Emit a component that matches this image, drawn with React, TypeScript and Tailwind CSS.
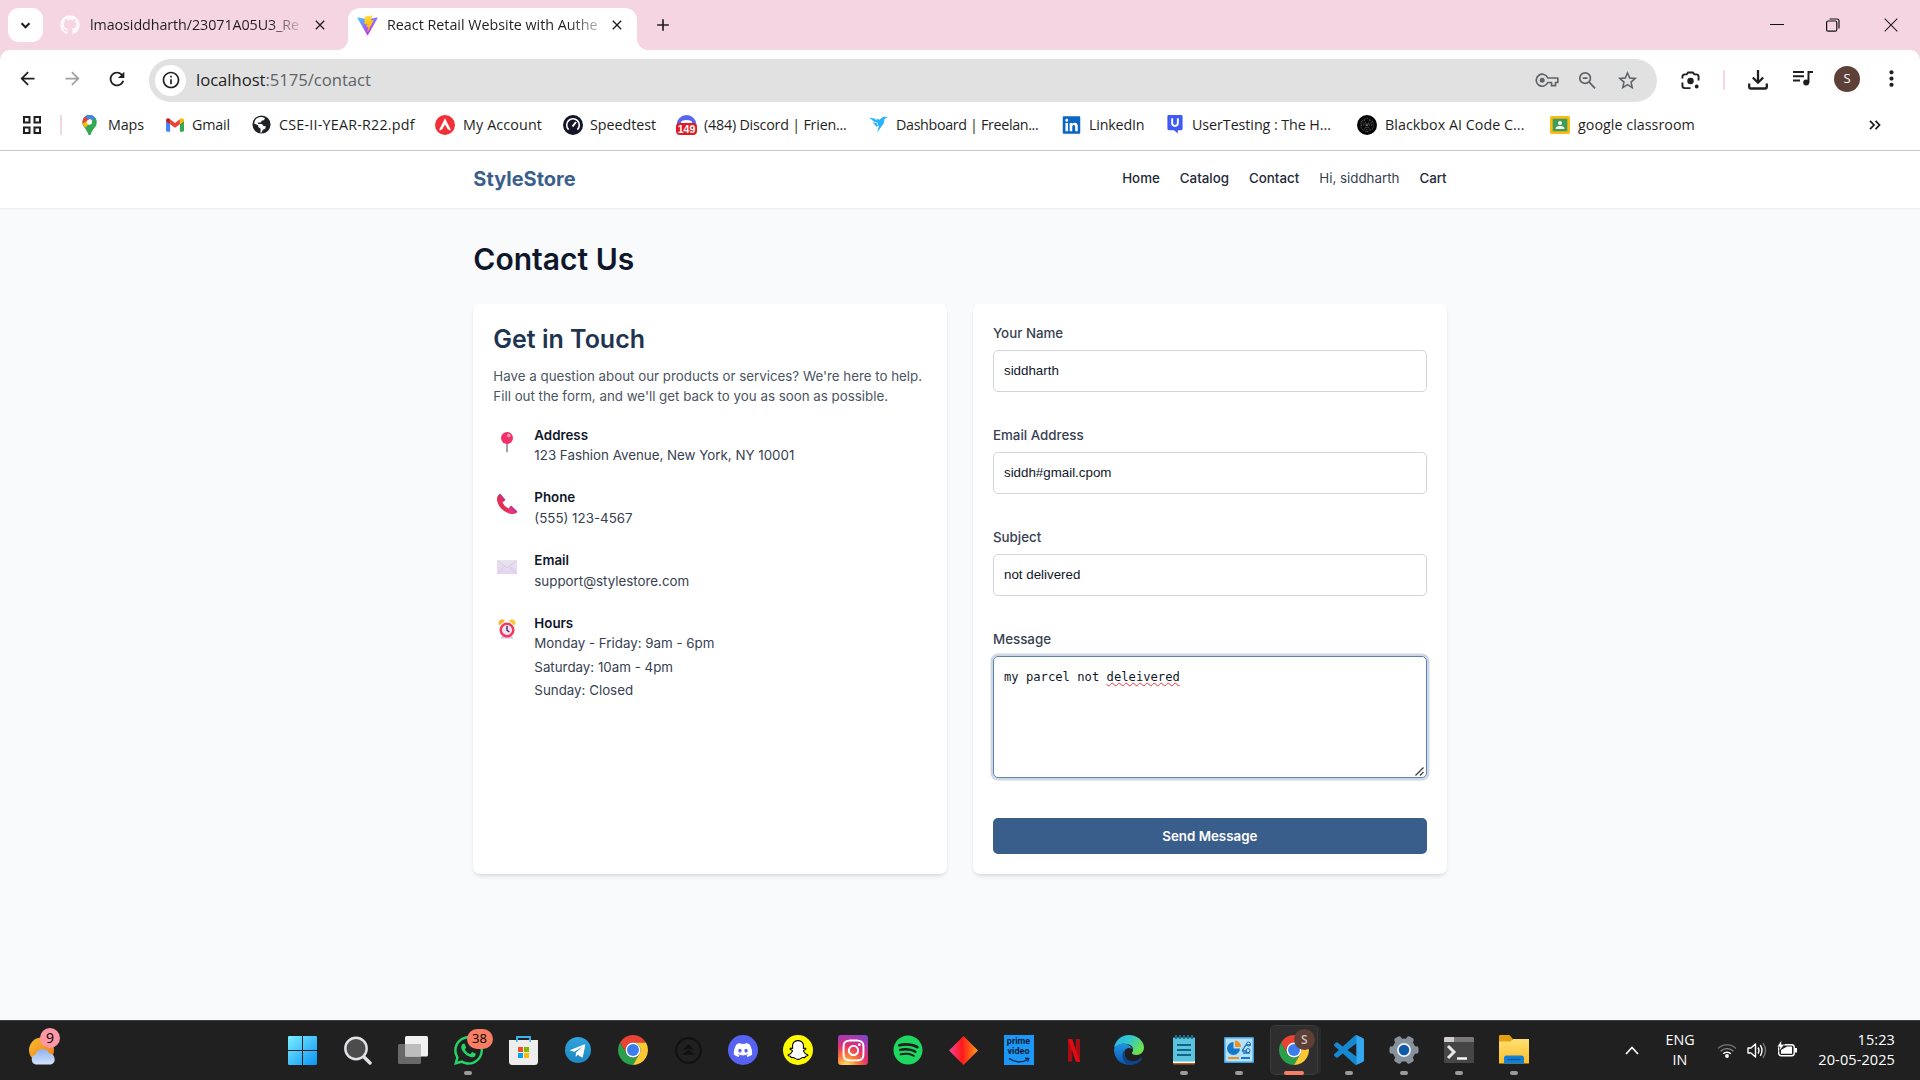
import React from 'react';
import { FaGithub, FaDiscord, FaSnapchatGhost, FaInstagram, FaSpotify, FaWhatsapp, FaLinkedin } from 'react-icons/fa';
import { MdArrowBack, MdArrowForward, MdRefresh, MdInfoOutline, MdStarBorder, MdMoreVert, MdClose, MdAdd } from 'react-icons/md';

const UI = 'font-["Open_Sans",sans-serif]';

function Chrome({ className }: { className: string }) {
  return (
    <svg viewBox="0 0 48 48" className={className}>
      <path fill="#ea4335" d="M24 12H44.78A24 24 0 0 0 3.22 12L13.61 30A12 12 0 0 1 24 12Z" />
      <path fill="#2b9f4a" d="M13.61 30L3.22 12A24 24 0 0 0 24 48L34.39 30A12 12 0 0 1 13.61 30Z" />
      <path fill="#fcc934" d="M34.39 30L24 48A24 24 0 0 0 44.78 12H24A12 12 0 0 1 34.39 30Z" />
      <circle cx="24" cy="24" r="12" fill="#fff" />
      <circle cx="24" cy="24" r="9.6" fill="#3b7ded" />
    </svg>
  );
}

function Vite() {
  return (
    <svg viewBox="0 0 410 404" className="h-[21px] w-[21px]">
      <defs>
        <linearGradient id="va" x1="6" y1="33" x2="235" y2="344" gradientUnits="userSpaceOnUse">
          <stop stopColor="#41D1FF" /><stop offset="1" stopColor="#BD34FE" />
        </linearGradient>
        <linearGradient id="vb" x1="194" y1="9" x2="236" y2="293" gradientUnits="userSpaceOnUse">
          <stop stopColor="#FFEA83" /><stop offset=".08" stopColor="#FFDD35" /><stop offset="1" stopColor="#FFA800" />
        </linearGradient>
      </defs>
      <path fill="url(#va)" d="M399.6 59.5L215.6 388.5c-3.8 6.8-13.5 6.8-17.4.1L10.6 59.6c-4.2-7.4 2.1-16.4 10.4-14.9l184.2 32.9c1.2.2 2.4.2 3.5 0l180.4-32.8c8.3-1.5 14.6 7.4 10.5 14.7z" />
      <path fill="url(#vb)" d="M293 1.6L156.8 28.3c-2.2.4-3.9 2.3-4 4.6l-8.4 141.5c-.2 3.3 2.9 5.9 6.1 5.2l38-8.8c3.6-.8 6.8 2.3 6 5.9l-11.2 55.2c-.8 3.7 2.7 6.9 6.3 5.8l23.4-7.1c3.6-1.1 7.1 2.1 6.3 5.8l-17.9 86.8c-1.1 5.4 6.1 8.4 9.1 3.7l2-3.1 111.1-221.8c1.9-3.7-1.3-8-5.4-7.2l-39.1 7.5c-3.7.7-6.8-2.7-5.8-6.3l25.5-88.4c1-3.6-2.2-7-5.8-6.3z" />
    </svg>
  );
}

/* ---------- bookmark icons ---------- */
const mapsIcon = (
  <svg viewBox="0 0 16 22" className="h-[20px] w-[15px]">
    <defs><clipPath id="pin"><path d="M8 0a8 8 0 0 1 8 8c0 5-4.500 6.500-6.600 12.500-.5 2-2.300 2-2.800 0C4.500 14.500 0 13 0 8a8 8 0 0 1 8-8Z" /></clipPath></defs>
    <g clipPath="url(#pin)">
      <path fill="#34a853" d="M0 0h16v22H0z" />
      <path fill="#4285f4" d="M8 0h8v4L5 16 0 10Z" />
      <path fill="#1a73e8" d="M0 0h8L2 6Z" />
      <path fill="#ea4335" d="M0 2l3-1 5 6-5 6-3-3Z" />
      <path fill="#4285f4" d="M3 0h13v3L9 9Z" />
      <path fill="#fbbc04" d="M0 10l3.500 4L12 6l-3-2Z" />
      <path fill="#34a853" d="M16 3v19H5l-2-7.500L15 2Z" />
    </g>
    <circle cx="8" cy="7.800" r="2.900" fill="#fff" />
  </svg>
);
const gmailIcon = (
  <svg viewBox="0 0 24 18" className="h-[14px] w-[18px]">
    <path fill="#4285f4" d="M0 3v13.400C0 17.300.7 18 1.600 18H5.500V7.500Z" />
    <path fill="#34a853" d="M24 3v13.400c0 .9-.7 1.600-1.600 1.600H18.500V7.500Z" />
    <path fill="#c5221f" d="M0 2.500C0 .3 2.500-.9 4.200.4L5.500 1.400V8L0 4Z" />
    <path fill="#fbbc04" d="M24 2.500C24 .3 21.500-.9 19.800.4L18.500 1.400V8L24 4Z" />
    <path fill="#ea4335" d="M5.500 1.400L12 6.300l6.500-4.900V8L12 12.800 5.500 8Z" />
  </svg>
);
const globeIcon = (
  <svg viewBox="0 0 20 20" className="h-[19px] w-[19px]">
    <circle cx="10" cy="10" r="9.500" fill="#202124" />
    <path fill="#fff" d="M9 2.200c1.500 0 3.500.4 4.700 1.300l-1.200 2-2.500.5-.5 2H6.700l-.5 1.500h4.300l1.700 2 2.300.3-.4 2.500-2.500 1.200-1.500 3-1.300.2.300-4.200-2.500-2-.2-1.800L2.200 9C2.700 5.500 5 2.600 9 2.200Z" />
  </svg>
);
const accountIcon = (
  <svg viewBox="0 0 20 20" className="h-[20px] w-[20px]">
    <circle cx="10" cy="10" r="10" fill="#f03036" />
    <path d="M10 3.200L15.600 14.300q.4 1.600-1.200.9L12.600 14 10 9.600 7.400 14l-1.800 1.200q-1.600.7-1.200-.9Z" fill="#fff" />
  </svg>
);
const speedIcon = (
  <svg viewBox="0 0 20 20" className="h-[20px] w-[20px]" fill="none" stroke="#fff">
    <circle cx="10" cy="10" r="10" fill="#141526" stroke="none" />
    <path d="M5.600 14.600a6.300 6.300 0 1 1 8.800 0" strokeWidth="1.600" />
    <path d="M9.500 11.500L13 7" strokeWidth="2" />
  </svg>
);
const discordBadge = (
  <span className="relative block h-[20px] w-[21px]">
    <svg viewBox="0 0 21 20" className="h-full w-full">
      <circle cx="10.500" cy="10" r="10" fill="#5865f2" />
      <path d="M5.500 6q5-2 10 0l1 4h-12Z" fill="#fff" />
      <rect y="8" width="21" height="12" rx="4" fill="#e01b22" />
    </svg>
    <span className='absolute inset-x-0 top-[8px] text-center font-["Liberation_Sans",sans-serif] text-[10.500px] leading-[12px] font-bold text-white'>149</span>
  </span>
);
const birdIcon = (
  <svg viewBox="0 0 20 18" className="h-[17px] w-[19px]">
    <path fill="#29b2fe" d="M0 1.500L6.500 3l2 3.200L6 6.500ZM3.500 6.800L8 7.500l1.500 3-1.800 1L5.500 8.500ZM11 4l4-3.300L20 1l-3.500 1.800-1 5.200-7 9.500 1.800-6.500L7.500 4.500 9 3Z" />
  </svg>
);
const linkedinIcon = <FaLinkedin className="h-[20px] w-[19px] text-[#0a66c2]" />;
const userTestingIcon = (
  <svg viewBox="0 0 16 20" className="h-[19px] w-[16px]">
    <path fill="#3f5bf6" d="M1.500 0h13A1.500 1.500 0 0 1 16 1.500v13a1.500 1.500 0 0 1-1.500 1.500H11v3.500L7 16H1.500A1.500 1.500 0 0 1 0 14.500v-13A1.500 1.500 0 0 1 1.500 0Z" />
    <path d="M5 3.500v5a3 3 0 0 0 6 0v-5" stroke="#fff" strokeWidth="2" fill="none" />
  </svg>
);
const blackboxIcon = (
  <svg viewBox="0 0 20 20" className="h-[20px] w-[20px]">
    <circle cx="10" cy="10" r="10" fill="#050505" />
    <g stroke="#8a8a8a" strokeWidth=".7" fill="none" strokeDasharray="1 1">
      <path d="M10 3l6 3.500v7L10 17l-6-3.500v-7ZM4 6.500l6 3.500 6-3.500M10 10v7M7 5l6 10M13 5L7 15M4 10h12" />
    </g>
  </svg>
);
const classroomIcon = (
  <svg viewBox="0 0 20 18" className="h-[18px] w-[20px]">
    <rect width="20" height="18" rx="1.500" fill="#f9bc15" />
    <rect x="2.700" y="2.700" width="14.600" height="12.600" fill="#3f9b57" />
    <circle cx="10" cy="7" r="2" fill="#fff" />
    <path d="M5.500 13q0-3 4.500-3t4.500 3Z" fill="#fff" />
  </svg>
);

type Mark = { icon: React.ReactNode; text: string; cell: string; iconCell: string; track: string };
const marks: Mark[] = [
  { icon: mapsIcon, text: 'Maps', cell: 'w-[84px]', iconCell: 'w-[26px]', track: 'tracking-[-0.1px]' },
  { icon: gmailIcon, text: 'Gmail', cell: 'w-[86px]', iconCell: 'w-[26px]', track: 'tracking-[-0.16px]' },
  { icon: globeIcon, text: 'CSE-II-YEAR-R22.pdf', cell: 'w-[183px]', iconCell: 'w-[27px]', track: 'tracking-[0.22px]' },
  { icon: accountIcon, text: 'My Account', cell: 'w-[128px]', iconCell: 'w-[28px]', track: 'tracking-[0.13px]' },
  { icon: speedIcon, text: 'Speedtest', cell: 'w-[113px]', iconCell: 'w-[27px]', track: 'tracking-[-0.05px]' },
  { icon: discordBadge, text: '(484) Discord | Frien...', cell: 'w-[193px]', iconCell: 'w-[28px]', track: 'tracking-[-0.21px]' },
  { icon: birdIcon, text: 'Dashboard | Freelan...', cell: 'w-[193px]', iconCell: 'w-[27px]', track: 'tracking-[-0.34px]' },
  { icon: linkedinIcon, text: 'LinkedIn', cell: 'w-[105px]', iconCell: 'w-[27px]', track: 'tracking-[-0.2px]' },
  { icon: userTestingIcon, text: 'UserTesting : The H...', cell: 'w-[190px]', iconCell: 'w-[25px]', track: 'tracking-[-0.07px]' },
  { icon: blackboxIcon, text: 'Blackbox AI Code C...', cell: 'w-[193px]', iconCell: 'w-[28px]', track: 'tracking-[0.03px]' },
  { icon: classroomIcon, text: 'google classroom', cell: 'w-[150px]', iconCell: 'w-[28px]', track: 'tracking-[0.03px]' },
];

function Browser() {
  return (
    <header className={`${UI} text-[#1f1f1f]`}>
      {/* tab strip */}
      <div className="flex h-[50px] bg-[#f6d5e3] pl-2">
        <div className="mt-2 grid h-[34px] w-[35px] place-items-center rounded-[11px] bg-white">
          <svg viewBox="0 0 12 8" className="h-[7px] w-[11px]" fill="none" stroke="#1f1f1f" strokeWidth="2.400"><path d="M1.500 1.500L6 6l4.500-4.500" /></svg>
        </div>
        <div className="flex h-[50px] w-[305px] items-center pl-[17px]">
          <FaGithub className="h-[20px] w-[20px] shrink-0 text-[#fdf6fa]" />
          <span className="ml-[10px] w-[212px] shrink-0 overflow-hidden bg-linear-to-r from-[#1f1f1f] from-85% to-[#1f1f1f]/10 bg-clip-text text-[14.3px] tracking-[-0.07px] whitespace-nowrap text-transparent">lmaosiddharth/23071A05U3_Re</span>
          <MdClose className="ml-[10px] h-[16px] w-[16px] shrink-0" />
        </div>
        <div className="relative mt-2 flex h-[42px] w-[289px] items-center rounded-t-[12px] bg-white pl-[9px]">
          <span className="absolute bottom-0 -left-[12px] h-[12px] w-[12px] bg-[radial-gradient(circle_at_0_0,#f6d5e3_12px,#fff_12.500px)]" />
          <span className="absolute -right-[12px] bottom-0 h-[12px] w-[12px] bg-[radial-gradient(circle_at_100%_0,#f6d5e3_12px,#fff_12.500px)]" />
          <div className="-mt-2 flex items-center">
            <Vite />
            <span className="ml-[9px] w-[212px] overflow-hidden bg-linear-to-r from-[#1f1f1f] from-85% to-[#1f1f1f]/30 bg-clip-text text-[14.3px] whitespace-nowrap text-transparent">React Retail Website with Authe</span>
            <MdClose className="ml-[10px] h-[16px] w-[16px] shrink-0" />
          </div>
        </div>
        <MdAdd className="mt-[15px] ml-[16px] h-[20px] w-[20px]" />
        <div className="ml-auto flex h-[50px] items-center">
          <svg className="h-[14px] w-[14px]" viewBox="0 0 14 14"><path d="M0 6.500h14" stroke="#111" /></svg>
          <svg className="ml-[42px] h-[14px] w-[14px]" viewBox="0 0 14 14" fill="none" stroke="#111" strokeWidth="1.200"><rect x=".6" y="3" width="10.200" height="10.200" rx="1.500" /><path d="M3.500 1H11a2 2 0 0 1 2 2v7.500" /></svg>
          <svg className="mr-[22px] ml-[44px] h-[14px] w-[14px]" viewBox="0 0 14 14"><path d="M.7.7l12.600 12.600M13.300.7L.7 13.300" stroke="#222" strokeWidth="1.100" /></svg>
        </div>
      </div>
      <div className="bg-[#f6d5e3]">
        <div className="rounded-t-[10px] bg-white">
          {/* address row */}
          <div className="flex h-[60px] items-center pt-[1px] pl-[17px]">
            <MdArrowBack className="-mt-[4px] h-[21px] w-[21px]" />
            <MdArrowForward className="-mt-[4px] ml-[24px] h-[21px] w-[21px] text-[#a0a0a0]" />
            <MdRefresh className="-mt-[4px] ml-[23px] h-[22px] w-[22px]" />
            <div className="ml-[21px] flex h-[43px] w-[1508px] items-center rounded-full bg-[#e1e1e1] pl-[6px]">
              <div className="-mt-px grid h-[31px] w-[31px] place-items-center rounded-full bg-white"><MdInfoOutline className="h-[20px] w-[20px]" /></div>
              <span className="-mt-[2px] ml-[10px] text-[16.700px] tracking-[-0.05px]">localhost<span className="text-[#5f6368]">:5175/contact</span></span>
              <div className="mr-[18px] ml-auto -mt-px flex items-center text-[#5f6368]">
                <svg viewBox="0 0 24 14" className="h-[14px] w-[24px]" fill="none" stroke="currentColor" strokeWidth="1.700">
                  <path d="M12.800 5a6 6 0 1 0 0 4.500H16.500v3.200h4V9.500H22.800V5Z" strokeLinejoin="round" /><circle cx="7.200" cy="7.200" r="2.500" fill="currentColor" stroke="none" />
                </svg>
                <svg viewBox="0 0 20 20" className="ml-[19px] h-[19px] w-[19px]" fill="none" stroke="currentColor" strokeWidth="1.800">
                  <circle cx="7.500" cy="7.500" r="5.600" /><path d="M11.700 11.700l6.300 6.500M5 7.500h5" />
                </svg>
                <MdStarBorder className="ml-[19px] h-[23px] w-[23px]" />
              </div>
            </div>
            <svg viewBox="0 0 20 20" className="-mt-px ml-[24px] h-[19px] w-[19px]" fill="none" stroke="#1f1f1f" strokeWidth="2">
              <path d="M1.500 8V6a2.500 2.500 0 0 1 2.500-2.500h2L7.500 1.500h5L14 3.500h2A2.500 2.500 0 0 1 18.500 6v4M1.500 12v3.500A2.500 2.500 0 0 0 4 18h6" />
              <circle cx="10" cy="10.500" r="3.400" fill="#1f1f1f" stroke="none" /><circle cx="16.500" cy="16.300" r="2" fill="#1f1f1f" stroke="none" />
            </svg>
            <span className="-mt-px ml-[23px] h-[20px] w-[2px] rounded bg-[#f6d5e3]" />
            <svg viewBox="0 0 20 20" className="-mt-px ml-[23px] h-[20px] w-[20px]" fill="none" stroke="#1f1f1f" strokeWidth="2.300">
              <path d="M10 0v12M4.800 7.500L10 12.700l5.200-5.200M1.200 13.500v3.300a1.700 1.700 0 0 0 1.700 1.700h14.200a1.700 1.700 0 0 0 1.700-1.700v-3.300" />
            </svg>
            <svg viewBox="0 0 20 16" className="-mt-[5px] ml-[25px] h-[16px] w-[20px]" fill="none" stroke="#1f1f1f" strokeWidth="2">
              <path d="M0 2h11M0 6.200h11M0 10.400h7M15.500 12.500V2H20" /><circle cx="13.200" cy="12.500" r="3" fill="#1f1f1f" stroke="none" />
            </svg>
            <div className="-mt-[4px] ml-[21px] grid h-[26px] w-[26px] place-items-center rounded-full bg-[#5d4037] text-[13px] text-white">S</div>
            <MdMoreVert className="-mt-[4px] ml-[19px] h-[25px] w-[25px]" />
          </div>
          {/* bookmarks */}
          <div className="flex h-[40px] items-center pb-[11px] pl-[23px]">
            <svg viewBox="0 0 18 18" className="h-[18px] w-[18px]" fill="none" stroke="#1f1f1f" strokeWidth="2">
              <path d="M1 1h5.500v5.500H1zM11.500 1H17v5.500h-5.500zM1 11.500h5.500V17H1zM11.500 11.500H17V17h-5.500z" />
            </svg>
            <span className="mr-[20px] ml-[19px] h-[20px] w-[2px] shrink-0 bg-[#f6d5e3]" />
            {marks.map((m) => (
              <div key={m.text} className={`flex shrink-0 items-center ${m.cell}`}>
                <span className={`shrink-0 ${m.iconCell}`}>{m.icon}</span>
                <span className={`text-[14.3px] leading-5 whitespace-nowrap ${m.track}`}>{m.text}</span>
              </div>
            ))}
            <svg viewBox="0 0 12 10" className="ml-[169px] h-[10px] w-[12px]" fill="none" stroke="#1f1f1f" strokeWidth="1.800"><path d="M1 .8L5 5 1 9.200M6.500.8L10.500 5l-4 4.200" /></svg>
          </div>
          <div className="h-px bg-[#c9c9c9]" />
        </div>
      </div>
    </header>
  );
}

/* ---------- contact page ---------- */
const pinEmoji = (
  <svg viewBox="0 0 20 22" className="h-[22px] w-[20px]">
    <rect x="9" y="11" width="2" height="9.500" rx="1" fill="#a79db0" />
    <circle cx="10" cy="6" r="6" fill="#f2306b" /><circle cx="11.800" cy="3.500" r="1.700" fill="#fda3bd" />
  </svg>
);
const phoneEmoji = (
  <svg viewBox="0 0 20 20" className="h-[20px] w-[20px]">
    <path fill="#e32f56" d="M1.200 1.200L3.300 0l4.900 6-2.700 2.500q1.500 3.700 6 6L14 11.800l6 5.500-.5 1.700q-4 2-8.500 0Q1.500 15 0 6q-.2-3 1.200-4.800Z" />
    <path fill="#b9358c" d="M2 .5L3.300 0l5.200 5.700-2 1.600ZM12.700 13.200L14 11.600l6 5.600-.4 1.400Z" />
    <path fill="#e8338f" d="M12 15l1-1.500 6.500 5.200q-4 1.500-7.500.2Z" />
  </svg>
);
const mailEmoji = (
  <svg viewBox="0 0 20 14" className="h-[14px] w-[20px]">
    <defs><linearGradient id="ml" x1="0" y1="0" x2="0" y2="1"><stop stopColor="#e8e5ee" /><stop offset="1" stopColor="#e4d2f2" /></linearGradient></defs>
    <rect width="20" height="14" rx=".8" fill="url(#ml)" />
    <path d="M.5.7L10 8l9.500-7.300M.5 13.300l7-6.800M19.500 13.300l-7-6.800" stroke="#cfc4da" strokeWidth=".7" fill="none" />
  </svg>
);
const clockEmoji = (
  <svg viewBox="0 0 18 20" className="ml-px h-[20px] w-[18px]">
    <path d="M2.500 19.500L5 15.500h8l2.500 4Z" fill="#d9c4ea" />
    <path d="M.5 5.500Q0 .5 4.500.3L7.200 1.700 2 6Z" fill="#f5b52c" /><path d="M17.500 5.500Q18 .5 13.500.3L10.800 1.700 16 6Z" fill="#fbc934" />
    <circle cx="9" cy="11" r="6.300" fill="#efe3f5" stroke="#f23a5e" strokeWidth="2.500" />
    <path d="M9 7v4.200l2.300 1.800" stroke="#3d2a55" strokeWidth="1.400" fill="none" />
  </svg>
);

const infos: { icon: React.ReactNode; pad: string; title: string; lines: string[] }[] = [
  { icon: pinEmoji, pad: 'pt-[5px]', title: 'Address', lines: ['123 Fashion Avenue, New York, NY 10001'] },
  { icon: phoneEmoji, pad: 'pt-[5px]', title: 'Phone', lines: ['(555) 123-4567'] },
  { icon: mailEmoji, pad: 'pt-[8px]', title: 'Email', lines: ['support@stylestore.com'] },
  { icon: clockEmoji, pad: 'pt-[4px]', title: 'Hours', lines: ['Monday - Friday: 9am - 6pm', 'Saturday: 10am - 4pm', 'Sunday: Closed'] },
];

function Field({ label, value }: { label: string; value: string }) {
  return (
    <div className="mb-[33px]">
      <div className="mb-[7px] leading-5 font-medium text-[#374151]">{label}</div>
      <div className='flex h-[42px] items-center rounded-[5px] border border-[#d1d5db] px-[10px] font-["Liberation_Sans",sans-serif] text-[13.330px] text-[#0f172a]'>{value}</div>
    </div>
  );
}

const card = 'h-[570px] rounded-[7px] bg-white px-5 pb-5 shadow-[0_3px_5px_-1px_rgba(0,0,0,0.1),0_2px_3px_-1px_rgba(0,0,0,0.06)]';

function Page() {
  return (
    <div className='min-h-0 grow bg-[#f9fafc] font-["Inter",sans-serif] text-[13.330px]'>
      <div className="h-[57px] bg-white shadow-[0_1px_2px_rgba(0,0,0,0.07)]">
        <div className="mx-auto flex h-[56px] w-[973.330px] items-center justify-between">
          <span className="text-[20px] font-bold text-[#3b5f8c]">StyleStore</span>
          <nav className="flex gap-5 font-medium text-[#1f2937]">
            <span>Home</span><span>Catalog</span><span>Contact</span>
            <span className="font-normal text-[#374151]">Hi, siddharth</span><span>Cart</span>
          </nav>
        </div>
      </div>
      <main className="mx-auto w-[973.330px] pt-[33px]">
        <h1 className="mb-[27px] text-[30px] leading-9 font-semibold text-[#0f172a]">Contact Us</h1>
        <div className="grid grid-cols-2 gap-[26px]">
          <section className={`${card} pt-5`}>
            <h2 className="text-[25px] leading-[30px] font-semibold text-[#1e3450]">Get in Touch</h2>
            <p className="mt-3 mb-[20.500px] leading-5 whitespace-nowrap text-[#4b5563]">Have a question about our products or services? We're here to help.<br />Fill out the form, and we'll get back to you as soon as possible.</p>
            <div className="flex flex-col gap-[22px]">
              {infos.map((i) => (
                <div key={i.title} className="flex">
                  <div className={`h-[40px] w-[41px] pl-[4px] ${i.pad}`}>{i.icon}</div>
                  <div>
                    <h3 className="leading-[17.500px] font-semibold text-[#0f172a]">{i.title}</h3>
                    {i.lines.map((l) => <p key={l} className="leading-[23.300px] text-[#374151]">{l}</p>)}
                  </div>
                </div>
              ))}
            </div>
          </section>
          <section className={`${card} pt-[19px]`}>
            <Field label="Your Name" value="siddharth" />
            <Field label="Email Address" value="siddh#gmail.cpom" />
            <Field label="Subject" value="not delivered" />
            <div className="mb-[7px] leading-5 font-medium text-[#374151]">Message</div>
            <div className='relative h-[122px] rounded-[5px] border border-[#5a82b4] px-[10px] pt-[12px] font-["DejaVu_Sans_Mono",monospace] text-[12.180px] leading-4 text-[#0f172a] shadow-[0_0_0_2.500px_#ced7e2]'>
              my parcel not <span className="underline decoration-[#f0323c] decoration-wavy decoration-[1px] underline-offset-[1px]">deleivered</span>
              <svg viewBox="0 0 10 10" className="absolute right-[2px] bottom-[1px] h-[9px] w-[9px]" stroke="#444" strokeWidth="1.500"><path d="M.5 9.500l9-9M5.500 9.500l4-4" /></svg>
            </div>
            <div className="mt-10 grid h-[36px] place-items-center rounded-[5px] bg-[#3a5e8c] pt-[1px] font-semibold text-white">Send Message</div>
          </section>
        </div>
      </main>
    </div>
  );
}

/* ---------- taskbar ---------- */
const winIcon = (
  <svg viewBox="0 0 29 29" className="h-[29px] w-[29px]">
    <defs><linearGradient id="wn" x1="0" y1="0" x2="29" y2="29" gradientUnits="userSpaceOnUse"><stop stopColor="#7ceeff" /><stop offset="1" stopColor="#0a93f5" /></linearGradient></defs>
    <path fill="url(#wn)" d="M0 1a1 1 0 0 1 1-1h13v14H0ZM15 0h13a1 1 0 0 1 1 1v13H15ZM0 15h14v14H1a1 1 0 0 1-1-1ZM15 15h14v13a1 1 0 0 1-1 1H15Z" />
  </svg>
);
const searchIcon = (
  <svg viewBox="0 0 28 29" className="h-[29px] w-[28px]" fill="none" stroke="#e2e2e6">
    <path d="M19 20l7 7" strokeWidth="3.400" strokeLinecap="round" /><circle cx="12" cy="12.500" r="10.700" fill="#4c4c4c" strokeWidth="2.400" />
  </svg>
);
const taskViewIcon = (
  <svg viewBox="0 0 30 28" className="h-[28px] w-[30px]">
    <rect y="8" width="23" height="20" rx="1.500" fill="#686868" /><rect x="7" width="23" height="20.500" rx="1.500" fill="#f1f1f1" /><path d="M7 8h16v12.500H8.500A1.500 1.500 0 0 1 7 19Z" fill="#bdbdbd" />
  </svg>
);
const storeIcon = (
  <svg viewBox="0 0 29 29" className="h-[29px] w-[29px]">
    <path d="M8 6V1h13v5" fill="none" stroke="#36b6ee" strokeWidth="1.800" />
    <path d="M0 4h29v21.500a3.500 3.500 0 0 1-3.500 3.500h-22A3.500 3.500 0 0 1 0 25.500Z" fill="#ededed" />
    <path d="M7.800 2.500V6M21.200 2.500V6" stroke="#36b6ee" strokeWidth="1.600" />
    <path fill="#f25022" d="M9 11h5v5H9z" /><path fill="#7fba00" d="M15 11h5v5h-5z" /><path fill="#00a4ef" d="M9 17h5v5H9z" /><path fill="#ffb900" d="M15 17h5v5h-5z" />
  </svg>
);
const telegramIcon = (
  <svg viewBox="0 0 240 240" className="h-[26px] w-[26px]">
    <defs><linearGradient id="tg" x1="0" y1="0" x2="0" y2="1"><stop stopColor="#30a5de" /><stop offset="1" stopColor="#1f86c0" /></linearGradient></defs>
    <circle cx="120" cy="120" r="120" fill="url(#tg)" />
    <path fill="#fff" d="M50 119L176 70c7-2 12 1 10 11l-21 101c-2 7-6 9-13 5l-33-24-16 16c-3 2-4 2-5-1l4-35 60-56-76 48-36-11c-6-2-6-4 0-5Z" />
  </svg>
);
const darkIcon = (
  <svg viewBox="0 0 27 27" className="h-[27px] w-[27px]">
    <circle cx="13.500" cy="13.500" r="12.300" fill="none" stroke="#121212" strokeWidth="2.200" />
    <path d="M13.500 7.500l5.500 5h-3l-2.500-1-2.500 1H8ZM13.500 12.800l6.500 5H7Z" fill="#101010" />
  </svg>
);
const igIcon = (
  <span className="grid h-[30px] w-[30px] place-items-center rounded-[3px] bg-[radial-gradient(circle_at_28%_105%,#fdd05a_8%,#fb7a3a_30%,#e0326f_55%,#a73bb5_80%,#5256d6_105%)]">
    <FaInstagram className="h-[25px] w-[25px] text-white" />
  </span>
);
const diamondIcon = (
  <svg viewBox="0 0 29 29" className="h-[29px] w-[29px]">
    <defs><linearGradient id="dm" x1="0" x2="1"><stop stopColor="#f5429b" /><stop offset=".45" stopColor="#ff1a1a" /><stop offset="1" stopColor="#ff9a1a" /></linearGradient></defs>
    <path d="M14.500 0L29 14.500 14.500 29 0 14.500Z" fill="url(#dm)" />
  </svg>
);
const primeIcon = (
  <span className='flex h-[30px] w-[30px] flex-col items-center bg-[#1b98f7] pt-[1px] font-["Roboto",sans-serif] text-[9px] leading-[11px] font-bold text-[#0b1c33]'>
    <span>prime</span>
    <span className="-mt-[1px]">video</span>
    <svg viewBox="0 0 22 7" className="h-[7px] w-[22px]" fill="none" stroke="#0b1c33" strokeWidth="1.300"><path d="M1 1.500q9 6 18 1.500M17 1.500h3.500L20 4.500" /></svg>
  </span>
);
const netflixIcon = (
  <svg viewBox="0 0 13 25" className="h-[23px] w-[12px]">
    <path d="M0 0h4.500v24.500L0 25ZM8.500 0H13v25l-4.500-.5Z" fill="#a80d14" /><path d="M0 0h4.500L13 25l-4.500-.5Z" fill="#e50914" />
  </svg>
);
const edgeIcon = (
  <svg viewBox="0 0 30 30" className="h-[30px] w-[30px]">
    <defs>
      <linearGradient id="e1" x1="0" y1="0" x2="1" y2=".5"><stop stopColor="#2cb3e8" /><stop offset=".5" stopColor="#33c6cf" /><stop offset="1" stopColor="#6be24d" /></linearGradient>
      <linearGradient id="e2" x1="0" y1="0" x2="0" y2="1"><stop stopColor="#1e95e0" /><stop offset="1" stopColor="#0f56ae" /></linearGradient>
    </defs>
    <path fill="url(#e1)" d="M0 13.500C1 5.500 7 0 15 0s15 6 15 12.500c0 4.500-3.500 7.500-7.500 7.500-3.500 0-5-1.200-4.500-2.200 1.700-2.300 1.700-6.500-3-8.300-6-2.200-13 .5-15 4Z" />
    <path fill="url(#e2)" d="M0 14.500C2 9.500 7.500 7.500 12.500 9c3 1 5 3 5.500 5-5-3-8.500 1.500-7.500 6 1 5 5.500 8 9.500 8.500C10 32.500 0 25.500 0 14.500Z" />
    <path fill="#0d458f" d="M11 14.500c-2.500 5 .5 10.500 6 11.500 4 .7 7.500-1 9.500-3 1.200-.8 2 .2 1.300 1.200C25.500 27.500 21 30 17 30 9.500 29.500 5.500 20 11 14.500Z" />
  </svg>
);
const notepadIcon = (
  <svg viewBox="0 0 22 30" className="h-[30px] w-[22px]">
    <rect y="3" width="22" height="26.500" rx="1" fill="#b5601e" /><rect y="3" width="22" height="25" fill="#f3f7f8" /><rect y="2.500" width="22" height="24" rx="1" fill="#5ac3df" />
    <path d="M3 0v4M7 0v4M11 0v4M15 0v4M19 0v4" stroke="#19708f" strokeWidth="2" /><path d="M4 10h14M4 15h14M4 20h14" stroke="#126482" strokeWidth="1.900" />
  </svg>
);
const panelIcon = (
  <svg viewBox="0 0 30 26" className="h-[26px] w-[30px]">
    <rect width="30" height="26" rx="1" fill="#3f9fdc" /><rect x="1.500" y="1.500" width="27" height="23" fill="#b5e1fa" />
    <path d="M9.500 5a6.500 6.500 0 1 0 6.500 6.500H9.500Z" fill="#1578c8" /><path d="M11 3.500v6.500h6A6.500 6.500 0 0 0 11 3.500Z" fill="#f58f1c" />
    <path d="M18 14l4-6h5M18 14h5M19 16h7" stroke="#1a6db5" strokeWidth="1.300" fill="none" /><circle cx="24.500" cy="7" r="2" fill="none" stroke="#1a6db5" /><circle cx="24" cy="13.500" r="2" fill="none" stroke="#1a6db5" />
    <path d="M4 21h11" stroke="#f58f1c" strokeWidth="2" /><path d="M17 21h9" stroke="#1578c8" strokeWidth="2" />
  </svg>
);
const codeIcon = (
  <svg viewBox="0 0 24 24" className="h-[30px] w-[30px]">
    <path fill="#1787cf" d="M23.150 2.587L18.210.21a1.494 1.494 0 0 0-1.705.29l-9.460 8.630-4.120-3.128a.999.999 0 0 0-1.276.057L.327 7.261A1 1 0 0 0 .326 8.740L3.899 12 .326 15.260a1 1 0 0 0 .001 1.479L1.650 17.940a.999.999 0 0 0 1.276.057l4.120-3.128 9.460 8.630a1.492 1.492 0 0 0 1.704.29l4.942-2.377A1.500 1.500 0 0 0 24 20.060V3.939a1.500 1.500 0 0 0-.85-1.352zm-5.146 14.861L10.826 12l7.178-5.448v10.896z" />
    <path fill="#35a7f0" d="M18.004.2l5.146 2.387A1.500 1.500 0 0 1 24 3.939V20.060a1.500 1.500 0 0 1-.85 1.352L18.004 23.800Z" />
  </svg>
);
const gearIcon = (
  <svg viewBox="-15 -15 30 30" className="h-[30px] w-[30px]">
    <g fill="#87919b">
      <circle r="11.500" />
      {[30, 90, 150].map((a) => <rect key={a} x="-3.800" y="-14.500" width="7.600" height="29" rx="2" transform={`rotate(${a})`} />)}
    </g>
    <circle r="7" fill="#e9f1f7" /><circle r="5.200" fill="#0e5aa8" />
  </svg>
);
const terminalIcon = (
  <svg viewBox="0 0 30 26" className="h-[26px] w-[30px]">
    <rect width="30" height="26" rx="1.500" fill="#464646" /><path d="M1.500 0h27A1.500 1.500 0 0 1 30 1.500V5H0V1.500A1.500 1.500 0 0 1 1.500 0Z" fill="#7b7779" /><path d="M1.500 0H10v5H0V1.500A1.500 1.500 0 0 1 1.500 0Z" fill="#d0cccf" />
    <path d="M4 9l6 6-6 6" stroke="#e8e8e8" strokeWidth="3" fill="none" /><path d="M13 21.500h10" stroke="#fff" strokeWidth="2.400" />
  </svg>
);
const folderIcon = (
  <svg viewBox="0 0 30 30" className="h-[30px] w-[30px]">
    <defs><linearGradient id="fd" x1="0" y1="0" x2="0" y2="1"><stop stopColor="#ffdf73" /><stop offset="1" stopColor="#fcbf2a" /></linearGradient></defs>
    <path d="M1 0h9.500l3 3.500V10H0V1.500A1.500 1.500 0 0 1 1 0Z" fill="#e2a10f" />
    <path d="M0 6.500h11.500L14 4h16v24.500H0Z" fill="url(#fd)" />
    <path d="M5 28.500V23a2.500 2.500 0 0 1 2.500-2.500h15A2.500 2.500 0 0 1 25 23v5.500Z" fill="#1380d6" /><path d="M8.500 24.500h13" stroke="#0b5ca4" strokeWidth="1.500" />
  </svg>
);
const whatsappIcon = (
  <span className="relative">
    <FaWhatsapp className="h-[33px] w-[33px] text-[#25d366]" />
    <span className="absolute -top-[5px] left-[15px] grid h-[20px] w-[26px] place-items-center rounded-full bg-[#f87d62] text-[13px] leading-none text-black">38</span>
  </span>
);
const snapIcon = (
  <span className="grid h-[30px] w-[30px] place-items-center rounded-full bg-[#fffc00]">
    <FaSnapchatGhost className="h-[20px] w-[20px] overflow-visible fill-white stroke-black stroke-[28px]" />
  </span>
);
const discordIcon = (
  <span className="grid h-[30px] w-[30px] place-items-center rounded-full bg-[#5562f2]"><FaDiscord className="h-[20px] w-[20px] text-white" /></span>
);
const spotifyIcon = <FaSpotify className="h-[30px] w-[30px] text-[#1ed760]" />;
const activeChrome = (
  <span className="relative">
    <Chrome className="h-[30px] w-[30px]" />
    <span className="absolute -top-[6px] left-[15px] grid h-[21px] w-[21px] place-items-center rounded-full bg-[#5d4037] text-[12px] font-semibold text-[#cfc0bb]">S</span>
  </span>
);

const tasks: { icon: React.ReactNode; state?: 'open' | 'active' }[] = [
  { icon: winIcon }, { icon: searchIcon }, { icon: taskViewIcon }, { icon: whatsappIcon, state: 'open' }, { icon: storeIcon },
  { icon: telegramIcon }, { icon: <Chrome className="h-[30px] w-[30px]" /> }, { icon: darkIcon }, { icon: discordIcon }, { icon: snapIcon },
  { icon: igIcon }, { icon: spotifyIcon }, { icon: diamondIcon }, { icon: primeIcon }, { icon: netflixIcon }, { icon: edgeIcon },
  { icon: notepadIcon, state: 'open' }, { icon: panelIcon, state: 'open' }, { icon: activeChrome, state: 'active' }, { icon: codeIcon, state: 'open' },
  { icon: gearIcon, state: 'open' }, { icon: terminalIcon, state: 'open' }, { icon: folderIcon, state: 'open' },
];

function Taskbar() {
  return (
    <footer className={`${UI} flex h-[60px] shrink-0 items-stretch border-t border-[#3c4043] bg-[#202020] text-white`}>
      <div className="w-[275.400px] pt-[6px] pl-[29px]">
        <div className="relative h-[38px] w-[34px]">
          <svg viewBox="0 0 28 28" className="absolute bottom-0 left-0 h-[28px] w-[28px]">
            <defs>
              <linearGradient id="sn" x1="0" y1="0" x2="1" y2="1"><stop stopColor="#f7bf2f" /><stop offset="1" stopColor="#f0731a" /></linearGradient>
              <linearGradient id="cl" x1="0" y1="0" x2="0" y2="1"><stop stopColor="#8fb4f0" /><stop offset="1" stopColor="#d5e3fb" /></linearGradient>
            </defs>
            <circle cx="12.500" cy="13" r="12.500" fill="url(#sn)" />
            <path d="M7 27.500a5 5 0 0 1-.5-9.800 7.500 7.500 0 0 1 14-1.200A5.700 5.700 0 0 1 22 27.500Z" fill="url(#cl)" />
          </svg>
          <span className="absolute top-[1px] left-[11px] grid h-[20px] w-[20px] place-items-center rounded-full bg-[#fd98a6] text-[14px] leading-none text-black">9</span>
        </div>
      </div>
      <div className="flex">
        {tasks.map((t, i) => (
          <div key={i} className="flex w-[55.060px] justify-center">
            <div className={`relative my-[4px] flex h-[50px] items-center justify-center ${t.state === 'active' ? 'w-[48px] rounded-[5px] border border-[#3b3b3b] bg-[#2e2e2e] shadow-[4px_0_0_-1px_#2a2a2a]' : 'w-[48px]'}`}>
              {t.icon}
              {t.state === 'open' && <span className="absolute bottom-0 left-1/2 h-[4px] w-[8px] -translate-x-1/2 rounded-full bg-[#9a9a9a]" />}
              {t.state === 'active' && <span className="absolute -bottom-px left-1/2 h-[4px] w-[20px] -translate-x-1/2 rounded-full bg-[#f87d62]" />}
            </div>
          </div>
        ))}
      </div>
      <div className="mr-[25px] ml-auto flex items-center">
        <svg viewBox="0 0 14 9" className="h-[9px] w-[14px]" fill="none" stroke="#fff" strokeWidth="1.700"><path d="M1 8l6-6.500L13 8" /></svg>
        <div className="ml-[25px] w-[32px] pb-[1px] text-center text-[14.3px] leading-[20px]">ENG<br />IN</div>
        <svg viewBox="0 0 20 15" className="-mt-[1px] ml-[21px] h-[15px] w-[20px]" fill="none">
          <path d="M1 5.500a12.700 12.700 0 0 1 18 0" stroke="#6a6a6a" strokeWidth="1.300" /><path d="M3.600 8.300a9 9 0 0 1 12.800 0" stroke="#8a8a8a" strokeWidth="1.300" /><path d="M6.200 10.800a5.400 5.400 0 0 1 7.600 0" stroke="#fff" strokeWidth="1.600" /><circle cx="10" cy="13" r="1.900" fill="#fff" />
        </svg>
        <svg viewBox="0 0 20 17" className="-mt-[1px] ml-[10px] h-[17px] w-[20px]" fill="none" stroke="#fff" strokeWidth="1.400">
          <path d="M1 6v5h3l4.500 4V2L4 6Z" strokeLinejoin="round" /><path d="M11 5.500q2 3 0 6M13.300 3.200q3.500 5.300 0 10.600" /><path d="M16 1.200q5 7.300 0 14.600" stroke="#777" />
        </svg>
        <svg viewBox="0 0 20 17" className="-mt-[5px] ml-[10px] h-[17px] w-[20px]">
          <rect x="1.700" y="4.700" width="15.500" height="11" rx="2.500" fill="none" stroke="#fff" strokeWidth="1.400" /><path d="M4 13.700V10l6-3.500h5v7.200ZM18 8h2v4.500h-2Z" fill="#fff" /><path d="M4.500 0L0 7h3L2 11.500 7.500 4.500H4.500Z" fill="#fff" stroke="#202020" strokeWidth=".6" />
        </svg>
        <div className="ml-[20px] w-[78px] pb-[2px] text-right text-[14.500px] leading-[20px] tracking-[0.1px] whitespace-nowrap">15:23<br />20-05-2025</div>
      </div>
    </footer>
  );
}

export default function App() {
  return (
    <div className="flex h-[1080px] w-[1920px] flex-col overflow-hidden">
      <Browser />
      <Page />
      <Taskbar />
    </div>
  );
}
